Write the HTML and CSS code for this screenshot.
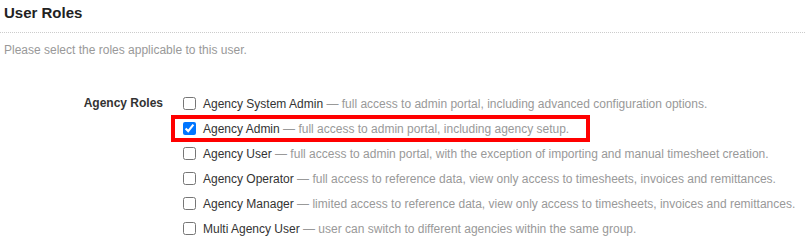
FILE: index.html
```html
<!DOCTYPE html>
<html>
<head>
    <title>User Roles</title>
    <link rel="stylesheet" href="styles.css">
</head>
<body>
    <div class="section">
        <h2 class="section-title">User Roles</h2>
        <p class="hint">Please select the roles applicable to this user.</p>
        <div class="roles">
            <div class="roles-label">Agency Roles</div>
            <div class="roles-list">
                <label class="role">
                    <input type="checkbox" class="check">
                    <span class="role-name">Agency System Admin</span>
                    <span class="role-desc">&nbsp;— full access to admin portal, including advanced configuration options.</span>
                </label>
                <label class="role role-highlight">
                    <input type="checkbox" class="check" checked>
                    <span class="role-name">Agency Admin</span>
                    <span class="role-desc">&nbsp;— full access to admin portal, including agency setup.</span>
                </label>
                <label class="role">
                    <input type="checkbox" class="check">
                    <span class="role-name">Agency User</span>
                    <span class="role-desc">&nbsp;— full access to admin portal, with the exception of importing and manual timesheet creation.</span>
                </label>
                <label class="role">
                    <input type="checkbox" class="check">
                    <span class="role-name">Agency Operator</span>
                    <span class="role-desc">&nbsp;— full access to reference data, view only access to timesheets, invoices and remittances.</span>
                </label>
                <label class="role">
                    <input type="checkbox" class="check">
                    <span class="role-name">Agency Manager</span>
                    <span class="role-desc">&nbsp;— limited access to reference data, view only access to timesheets, invoices and remittances.</span>
                </label>
                <label class="role">
                    <input type="checkbox" class="check">
                    <span class="role-name">Multi Agency User</span>
                    <span class="role-desc">&nbsp;— user can switch to different agencies within the same group.</span>
                </label>
            </div>
        </div>
    </div>
</body>
</html>
```

FILE: styles.css
```css
body {
    margin: 0;
    background: #fff;
    font-family: "Liberation Sans", Arial, sans-serif;
    font-size: 12px;
    color: #333;
}
.section {
    width: 805px;
}
.section-title {
    margin: 0;
    padding: 3px 4px 9px;
    font-size: 15px;
    line-height: 20px;
    font-weight: bold;
    color: #222;
    border-bottom: 1px dotted #ccc;
}
.hint {
    margin: 9px 0 0;
    padding-left: 4px;
    line-height: 16px;
    color: #999;
}
.roles {
    display: grid;
    grid-template-columns: 163px 1fr;
    column-gap: 20px;
    margin-top: 36px;
}
.roles-label {
    text-align: right;
    font-weight: bold;
    line-height: 19px;
    color: #333;
}
.roles-list {
    display: flex;
    flex-direction: column;
    gap: 6px;
}
.role {
    display: flex;
    align-items: center;
    height: 19px;
    white-space: nowrap;
}
.check {
    width: 13px;
    height: 13px;
    margin: 0 7px 0 0;
    accent-color: #0075ff;
}
.role-name {
    color: #333;
}
.role-desc {
    color: #999;
}
.role-highlight {
    width: fit-content;
    margin-left: -8px;
    padding: 0 17px 0 8px;
    outline: 4px solid #f00;
}
```
